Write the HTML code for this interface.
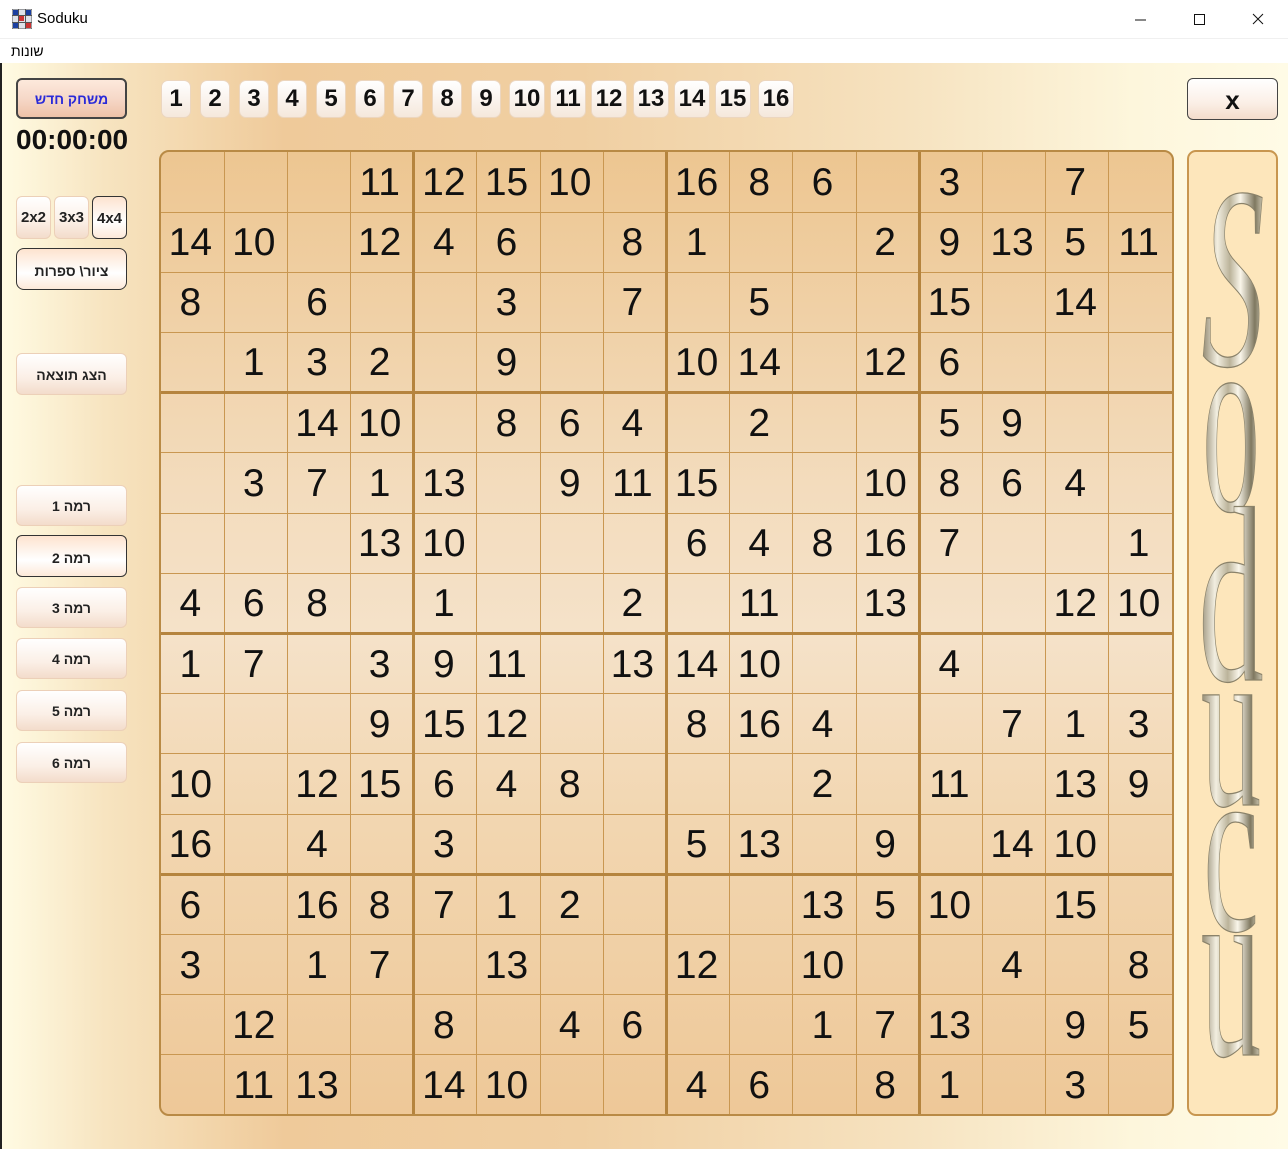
<!DOCTYPE html>
<html><head><meta charset="utf-8"><style>
*{margin:0;padding:0;box-sizing:border-box}
body{width:1288px;height:1149px;overflow:hidden;font-family:"Liberation Sans",sans-serif;background:#fff;position:relative}
.title{position:absolute;left:0;top:0;width:1288px;height:38px;background:#fff;font-size:15px}
.title .t{position:absolute;left:37px;top:10px}
.menu{position:absolute;left:0;top:38px;width:1288px;height:25px;background:#fff;border-top:1px solid #f0f0f0}
.menu span{position:absolute;left:11px;top:4px;font-size:14px;font-family:"Liberation Sans","DejaVu Sans",sans-serif}
.main{position:absolute;left:2px;top:63px;width:1286px;height:1086px;background:linear-gradient(90deg,#fffbe3 0%,#f7e4c0 8%,#efca9a 22%,#f0cfa2 45%,#f6e2bf 70%,#fdf6dc 88%,#fffbe6 100%)}
.btn{position:absolute;border-radius:6px;background:linear-gradient(#fff 0%,#fbefe6 60%,#f3dccb 100%);border:1px solid #ecd0b8;font-weight:bold;text-align:center;font-size:15px;color:#222;font-family:"Liberation Sans","DejaVu Sans",sans-serif}
.sel{border:1.5px solid #333;background:linear-gradient(#fde3cf,#fff 60%,#fde9d9)}
.nb{position:absolute;top:80px;height:38px;border-radius:7px;background:linear-gradient(#fff,#f5e8dc);border:1px solid #ecd6bf;font-weight:bold;font-size:24px;line-height:36px;text-align:center;color:#111}
.board{position:absolute;left:159px;top:150px;width:1015px;height:966px;border:2px solid #b98a45;border-radius:10px;overflow:hidden;background:linear-gradient(#edc691 0%,#f3dcbd 35%,#f5e2c9 50%,#f2d6b0 70%,#eec898 100%)}
table{border-collapse:collapse;width:100%;height:100%;table-layout:fixed}
td{border-right:1px solid #c99751;border-bottom:1px solid #c99751;text-align:center;vertical-align:middle;font-size:39px;color:#111;height:60.2px;padding-top:2px;padding-right:4px}
td:nth-child(4n){border-right:3px solid #b5843e}
td:last-child{border-right:none}
tr:nth-child(4n) td{border-bottom:3px solid #b5843e}
tr:last-child td{border-bottom:none}
.logo{position:absolute;left:1187px;top:150px;width:91px;height:966px;border:2px solid #c8964f;border-radius:9px;background:#fde6bb}
svg text{font-family:"Liberation Serif",serif;font-size:100px}
</style></head><body>
<div class="title"><svg style="position:absolute;left:12px;top:9px" width="20" height="20"><rect x="0" y="0" width="20" height="20" fill="#dfe3ea" stroke="#555"/><rect x="1" y="1" width="5" height="5" fill="#1b3fa0"/><rect x="14" y="1" width="5" height="5" fill="#1b3fa0"/><rect x="7" y="7" width="5" height="5" fill="#c33"/><rect x="1" y="14" width="5" height="5" fill="#1b3fa0"/><rect x="14" y="14" width="5" height="5" fill="#c33"/><path d="M6.5 0V20M13.5 0V20M0 6.5H20M0 13.5H20" stroke="#555" stroke-width="1"/></svg><span class="t">Soduku</span>
<svg style="position:absolute;left:1134px;top:12px" width="140" height="16"><path d="M1 8H12" stroke="#111"/><path d="M60.5 2.5H70.5V12.5H60.5Z" stroke="#111" fill="none"/><path d="M119 2L129 12M129 2L119 12" stroke="#111"/></svg></div>
<div class="menu"><span>שונות</span></div>
<div class="main"></div>
<div style="position:absolute;left:0;top:63px;width:2px;height:1086px;background:#222"></div>

<div class="btn" style="left:16px;top:78px;width:111px;height:41px;border:2px solid #444;background:linear-gradient(#fde9dc,#f6d8c8 50%,#eec2a8);color:#2a2ad8;line-height:38px;font-size:14px">משחק חדש</div>
<div style="position:absolute;left:16px;top:124px;font-size:28px;font-weight:bold;color:#111">00:00:00</div>
<div class="btn" style="left:16px;top:196px;width:35px;height:43px;line-height:42px;font-size:15px">2x2</div>
<div class="btn" style="left:54px;top:196px;width:35px;height:43px;line-height:42px;font-size:15px">3x3</div>
<div class="btn sel" style="left:92px;top:196px;width:35px;height:43px;line-height:44px;font-size:15px">4x4</div>
<div class="btn sel" style="left:16px;top:248px;width:111px;height:42px;line-height:44px;font-size:14px;border-radius:8px">ציור\ ספרות</div>
<div class="btn" style="left:16px;top:353px;width:111px;height:42px;line-height:42px;font-size:14px">הצג תוצאה</div>
<div class="btn" style="left:16px;top:485px;width:111px;height:41px;line-height:41px;font-size:14px">רמה 1</div>
<div class="btn sel" style="left:16px;top:535px;width:111px;height:42px;line-height:44px;font-size:14px">רמה 2</div>
<div class="btn" style="left:16px;top:587px;width:111px;height:41px;line-height:41px;font-size:14px">רמה 3</div>
<div class="btn" style="left:16px;top:638px;width:111px;height:41px;line-height:41px;font-size:14px">רמה 4</div>
<div class="btn" style="left:16px;top:690px;width:111px;height:41px;line-height:41px;font-size:14px">רמה 5</div>
<div class="btn" style="left:16px;top:742px;width:111px;height:41px;line-height:41px;font-size:14px">רמה 6</div>

<div class="nb" style="left:161px;width:30px">1</div>
<div class="nb" style="left:200px;width:30px">2</div>
<div class="nb" style="left:239px;width:30px">3</div>
<div class="nb" style="left:277px;width:30px">4</div>
<div class="nb" style="left:316px;width:30px">5</div>
<div class="nb" style="left:355px;width:30px">6</div>
<div class="nb" style="left:393px;width:30px">7</div>
<div class="nb" style="left:432px;width:30px">8</div>
<div class="nb" style="left:471px;width:30px">9</div>
<div class="nb" style="left:509px;width:36px">10</div>
<div class="nb" style="left:550px;width:36px">11</div>
<div class="nb" style="left:591px;width:36px">12</div>
<div class="nb" style="left:633px;width:36px">13</div>
<div class="nb" style="left:674px;width:36px">14</div>
<div class="nb" style="left:715px;width:36px">15</div>
<div class="nb" style="left:758px;width:36px">16</div>

<div class="btn" style="left:1187px;top:78px;width:91px;height:42px;border:1.5px solid #444;line-height:42px;font-size:26px;color:#111">x</div>

<div class="board"><table>
<tr><td></td><td></td><td></td><td>11</td><td>12</td><td>15</td><td>10</td><td></td><td>16</td><td>8</td><td>6</td><td></td><td>3</td><td></td><td>7</td><td></td></tr>
<tr><td>14</td><td>10</td><td></td><td>12</td><td>4</td><td>6</td><td></td><td>8</td><td>1</td><td></td><td></td><td>2</td><td>9</td><td>13</td><td>5</td><td>11</td></tr>
<tr><td>8</td><td></td><td>6</td><td></td><td></td><td>3</td><td></td><td>7</td><td></td><td>5</td><td></td><td></td><td>15</td><td></td><td>14</td><td></td></tr>
<tr><td></td><td>1</td><td>3</td><td>2</td><td></td><td>9</td><td></td><td></td><td>10</td><td>14</td><td></td><td>12</td><td>6</td><td></td><td></td><td></td></tr>
<tr><td></td><td></td><td>14</td><td>10</td><td></td><td>8</td><td>6</td><td>4</td><td></td><td>2</td><td></td><td></td><td>5</td><td>9</td><td></td><td></td></tr>
<tr><td></td><td>3</td><td>7</td><td>1</td><td>13</td><td></td><td>9</td><td>11</td><td>15</td><td></td><td></td><td>10</td><td>8</td><td>6</td><td>4</td><td></td></tr>
<tr><td></td><td></td><td></td><td>13</td><td>10</td><td></td><td></td><td></td><td>6</td><td>4</td><td>8</td><td>16</td><td>7</td><td></td><td></td><td>1</td></tr>
<tr><td>4</td><td>6</td><td>8</td><td></td><td>1</td><td></td><td></td><td>2</td><td></td><td>11</td><td></td><td>13</td><td></td><td></td><td>12</td><td>10</td></tr>
<tr><td>1</td><td>7</td><td></td><td>3</td><td>9</td><td>11</td><td></td><td>13</td><td>14</td><td>10</td><td></td><td></td><td>4</td><td></td><td></td><td></td></tr>
<tr><td></td><td></td><td></td><td>9</td><td>15</td><td>12</td><td></td><td></td><td>8</td><td>16</td><td>4</td><td></td><td></td><td>7</td><td>1</td><td>3</td></tr>
<tr><td>10</td><td></td><td>12</td><td>15</td><td>6</td><td>4</td><td>8</td><td></td><td></td><td></td><td>2</td><td></td><td>11</td><td></td><td>13</td><td>9</td></tr>
<tr><td>16</td><td></td><td>4</td><td></td><td>3</td><td></td><td></td><td></td><td>5</td><td>13</td><td></td><td>9</td><td></td><td>14</td><td>10</td><td></td></tr>
<tr><td>6</td><td></td><td>16</td><td>8</td><td>7</td><td>1</td><td>2</td><td></td><td></td><td></td><td>13</td><td>5</td><td>10</td><td></td><td>15</td><td></td></tr>
<tr><td>3</td><td></td><td>1</td><td>7</td><td></td><td>13</td><td></td><td></td><td>12</td><td></td><td>10</td><td></td><td></td><td>4</td><td></td><td>8</td></tr>
<tr><td></td><td>12</td><td></td><td></td><td>8</td><td></td><td>4</td><td>6</td><td></td><td></td><td>1</td><td>7</td><td>13</td><td></td><td>9</td><td>5</td></tr>
<tr><td></td><td>11</td><td>13</td><td></td><td>14</td><td>10</td><td></td><td></td><td>4</td><td>6</td><td></td><td>8</td><td>1</td><td></td><td>3</td><td></td></tr>
</table></div>

<div class="logo"></div>
<svg style="position:absolute;left:1187px;top:150px" width="91" height="966">
<defs><linearGradient id="g" x1="0" y1="0" x2="1" y2="0"><stop offset="0" stop-color="#8d846c"/><stop offset=".25" stop-color="#f2eee0"/><stop offset=".45" stop-color="#bbb39a"/><stop offset=".62" stop-color="#faf6ea"/><stop offset=".85" stop-color="#7f7860"/><stop offset="1" stop-color="#d8d2bd"/></linearGradient></defs>
<g fill="url(#g)" stroke="#8a826a" stroke-width=".5" text-anchor="middle">
<text transform="translate(46,215) scale(1.25,2.6)" font-style="italic">S</text>
<text transform="translate(44,360) scale(1.15,2.7)">o</text>
<text transform="translate(44,530) scale(1.3,2.5)">d</text>
<text transform="translate(44,655) scale(1.2,2.4)">u</text>
<text transform="translate(44,780) scale(1.25,2.5)">c</text>
<text transform="translate(44,905) scale(1.2,2.6)">u</text>
</g></svg>
</body></html>
